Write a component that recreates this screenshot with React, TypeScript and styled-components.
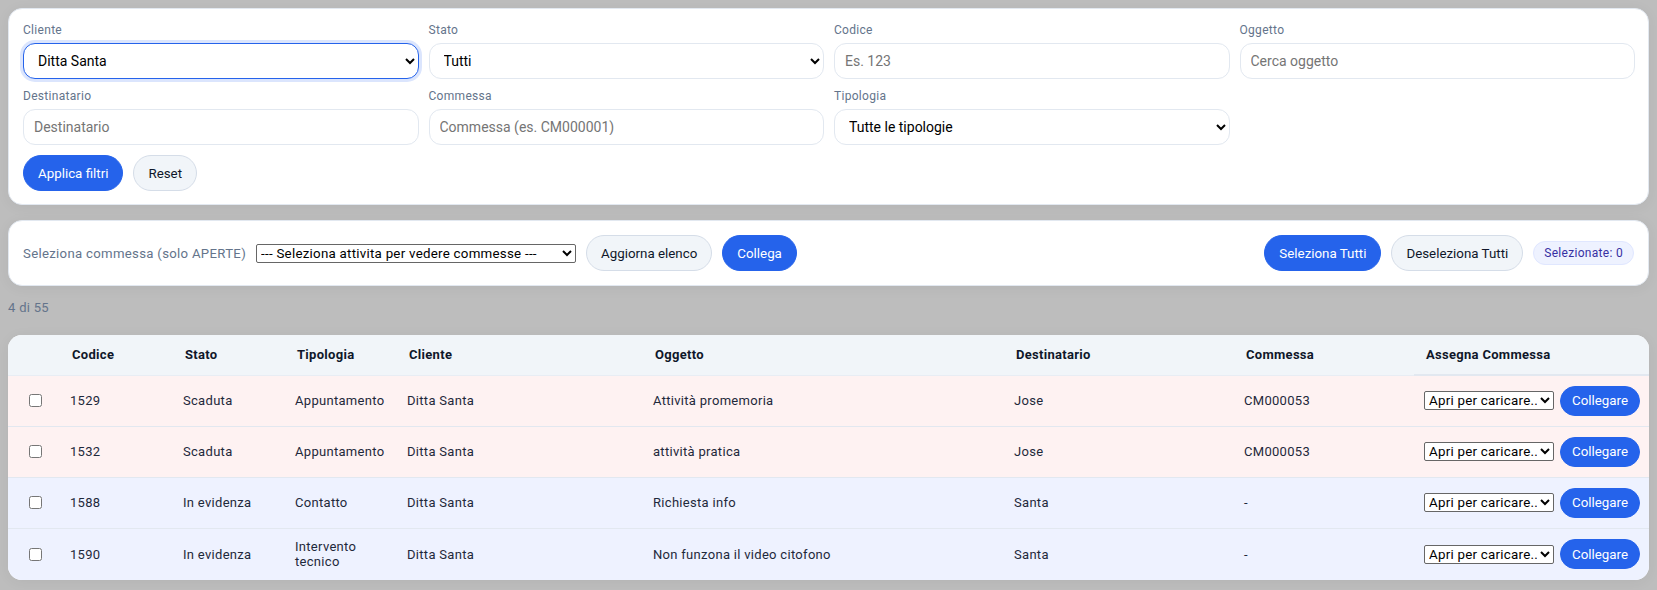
import React from "react";
import styled, { createGlobalStyle } from "styled-components";

const Global = createGlobalStyle`
  html, body { margin: 0; padding: 0; background: #bdbdbd; height: 590px; overflow: hidden; }
  * { box-sizing: border-box; }
  body { font-family: Roboto, "Liberation Sans", sans-serif; letter-spacing: .3px; }
`;
const Page = styled.div`
  padding: 8px 8px 0 8px; display: flex; flex-direction: column;
`;
const Card = styled.section`
  background: #fff; border-radius: 14px; border: 1px solid #e2e8f0;
  box-shadow: 0 2px 14px rgba(0, 0, 0, .05);
`;
const FilterCard = styled(Card)`
  padding: 13px 13px 13px 14px;
`;
const FilterGrid = styled.div`
  display: grid; grid-template-columns: repeat(4, 1fr); column-gap: 10px; row-gap: 9px;
`;
const Field = styled.label`
  display: flex; flex-direction: column; gap: 4px;
  font-size: 12px; line-height: 17px; color: #64748b;
`;
const Input = styled.input`
  height: 36px; border: 1px solid #e2e8f0; border-radius: 12px; padding: 0 10px;
  font: 14px Roboto, sans-serif; letter-spacing: 0; background: #fff; outline: none; min-width: 0;
  &::placeholder { color: #757575; }
`;
const Select = styled.select<{ $focus?: boolean }>`
  height: 36px; border: 1px solid ${p => p.$focus ? "#2563eb" : "#e2e8f0"}; border-radius: 12px; padding: 0 10px;
  font: 14px Roboto, sans-serif; letter-spacing: 0; color: #000; background-color: #fff; min-width: 0;
  ${p => p.$focus ? "box-shadow: 0 0 0 3px #dbe5fd;" : ""}
`;
const Actions = styled.div`
  display: flex; gap: 10px; margin-top: 10px;
`;
const Button = styled.button<{ $primary?: boolean }>`
  height: 36px; padding: 0 14px; border-radius: 18px; font: 400 13.33px Roboto, sans-serif; letter-spacing: 0;
  white-space: nowrap;
  border: 1px solid ${p => p.$primary ? "#2563eb" : "#d5dde8"};
  background: ${p => p.$primary ? "#2563eb" : "#f1f5f9"};
  color: ${p => p.$primary ? "#fff" : "#0f172a"};
`;
const LinkCard = styled(Card)`
  margin-top: 15px; height: 66px; padding: 0 14px; display: flex; align-items: center; gap: 10px;
`;
const Hint = styled.span`
  font-size: 13.2px; color: #64748b;
`;
const NativeSelect = styled.select<{ $w: number }>`
  width: ${p => p.$w}px; height: 19px; font: 13.33px Roboto, sans-serif; letter-spacing: .25px;
  background: #fff; color: #000; border: 1px solid #666; border-radius: 2px; padding: 0;
`;
const Spacer = styled.div` flex: 1; `;
const Badge = styled.span`
  height: 24px; padding: 0 10px; border-radius: 12px; background: #eef2ff; border: 1px solid #e0e7ff;
  color: #3730a3; font-size: 12px; display: inline-flex; align-items: center; white-space: nowrap;
`;
const Count = styled.div`
  margin-top: 14px; font-size: 13px; line-height: 15px; color: #64748b;
`;
const TableCard = styled(Card)`
  margin-top: 20px; overflow: hidden; border: 0;
`;
const Table = styled.table`
  width: 100%; border-collapse: collapse; table-layout: fixed; font-size: 13px; color: #1e293b;
`;
const Th = styled.th<{ $w: number }>`
  width: ${p => p.$w}px; height: 40px; text-align: left; padding: 0 12px; background: #f1f5f9;
  font-size: 13px; font-weight: 700; color: #0f172a; border-bottom: 1px solid #e8edf4;
  &:last-child { border-bottom: 2px solid #e2e8f0; }
`;
const Row = styled.tr<{ $tone: "red" | "blue" }>`
  background: ${p => p.$tone === "red" ? "#fef2f2" : "#eef2ff"};
`;
const Td = styled.td`
  height: 51px; padding: 0 10px; border-bottom: 1px solid #e2e8f0; line-height: 15px;
  tr:last-child & { border-bottom: 0; height: 52px; }
`;
const CheckBox = styled.input`
  width: 13px; height: 13px; margin: 0 0 0 11px; display: block;
`;
const AssignCell = styled.div`
  display: flex; align-items: center; gap: 6px;
`;
const SmallButton = styled(Button)`
  height: 30px; padding: 0 11px; border-radius: 15px;
`;

const rows = [
  { c: "1529", s: "Scaduta", t: "Appuntamento", o: "Attività promemoria", d: "Jose", m: "CM000053", tone: "red" as const },
  { c: "1532", s: "Scaduta", t: "Appuntamento", o: "attività pratica", d: "Jose", m: "CM000053", tone: "red" as const },
  { c: "1588", s: "In evidenza", t: "Contatto", o: "Richiesta info", d: "Santa", m: "-", tone: "blue" as const },
  { c: "1590", s: "In evidenza", t: "Intervento tecnico", o: "Non funzona il video citofono", d: "Santa", m: "-", tone: "blue" as const },
];

export default function App() {
  return (
    <Page>
      <Global />
      <FilterCard>
        <FilterGrid>
          <Field>Cliente<Select $focus defaultValue="a"><option value="a">Ditta Santa</option></Select></Field>
          <Field>Stato<Select><option>Tutti</option></Select></Field>
          <Field>Codice<Input placeholder="Es. 123" /></Field>
          <Field>Oggetto<Input placeholder="Cerca oggetto" /></Field>
          <Field>Destinatario<Input placeholder="Destinatario" /></Field>
          <Field>Commessa<Input placeholder="Commessa (es. CM000001)" /></Field>
          <Field>Tipologia<Select><option>Tutte le tipologie</option></Select></Field>
        </FilterGrid>
        <Actions>
          <Button $primary>Applica filtri</Button>
          <Button>Reset</Button>
        </Actions>
      </FilterCard>
      <LinkCard>
        <Hint>Seleziona commessa (solo APERTE)</Hint>
        <NativeSelect $w={320}><option>--- Seleziona attivita per vedere commesse ---</option></NativeSelect>
        <Button>Aggiorna elenco</Button>
        <Button $primary>Collega</Button>
        <Spacer />
        <Button $primary>Seleziona Tutti</Button>
        <Button>Deseleziona Tutti</Button>
        <Badge>Selezionate: 0</Badge>
      </LinkCard>
      <Count>4 di 55</Count>
      <TableCard>
        <Table>
          <thead>
            <tr>
              <Th $w={52}></Th>
              <Th $w={113}>Codice</Th>
              <Th $w={112}>Stato</Th>
              <Th $w={112}>Tipologia</Th>
              <Th $w={246}>Cliente</Th>
              <Th $w={361}>Oggetto</Th>
              <Th $w={230}>Destinatario</Th>
              <Th $w={180}>Commessa</Th>
              <Th $w={235}>Assegna Commessa</Th>
            </tr>
          </thead>
          <tbody>
            {rows.map(r => (
              <Row key={r.c} $tone={r.tone}>
                <Td><CheckBox type="checkbox" /></Td>
                <Td>{r.c}</Td>
                <Td>{r.s}</Td>
                <Td>{r.t}</Td>
                <Td>Ditta Santa</Td>
                <Td>{r.o}</Td>
                <Td>{r.d}</Td>
                <Td>{r.m}</Td>
                <Td>
                  <AssignCell>
                    <NativeSelect $w={130}><option>Apri per caricare...</option></NativeSelect>
                    <SmallButton $primary>Collegare</SmallButton>
                  </AssignCell>
                </Td>
              </Row>
            ))}
          </tbody>
        </Table>
      </TableCard>
    </Page>
  );
}
